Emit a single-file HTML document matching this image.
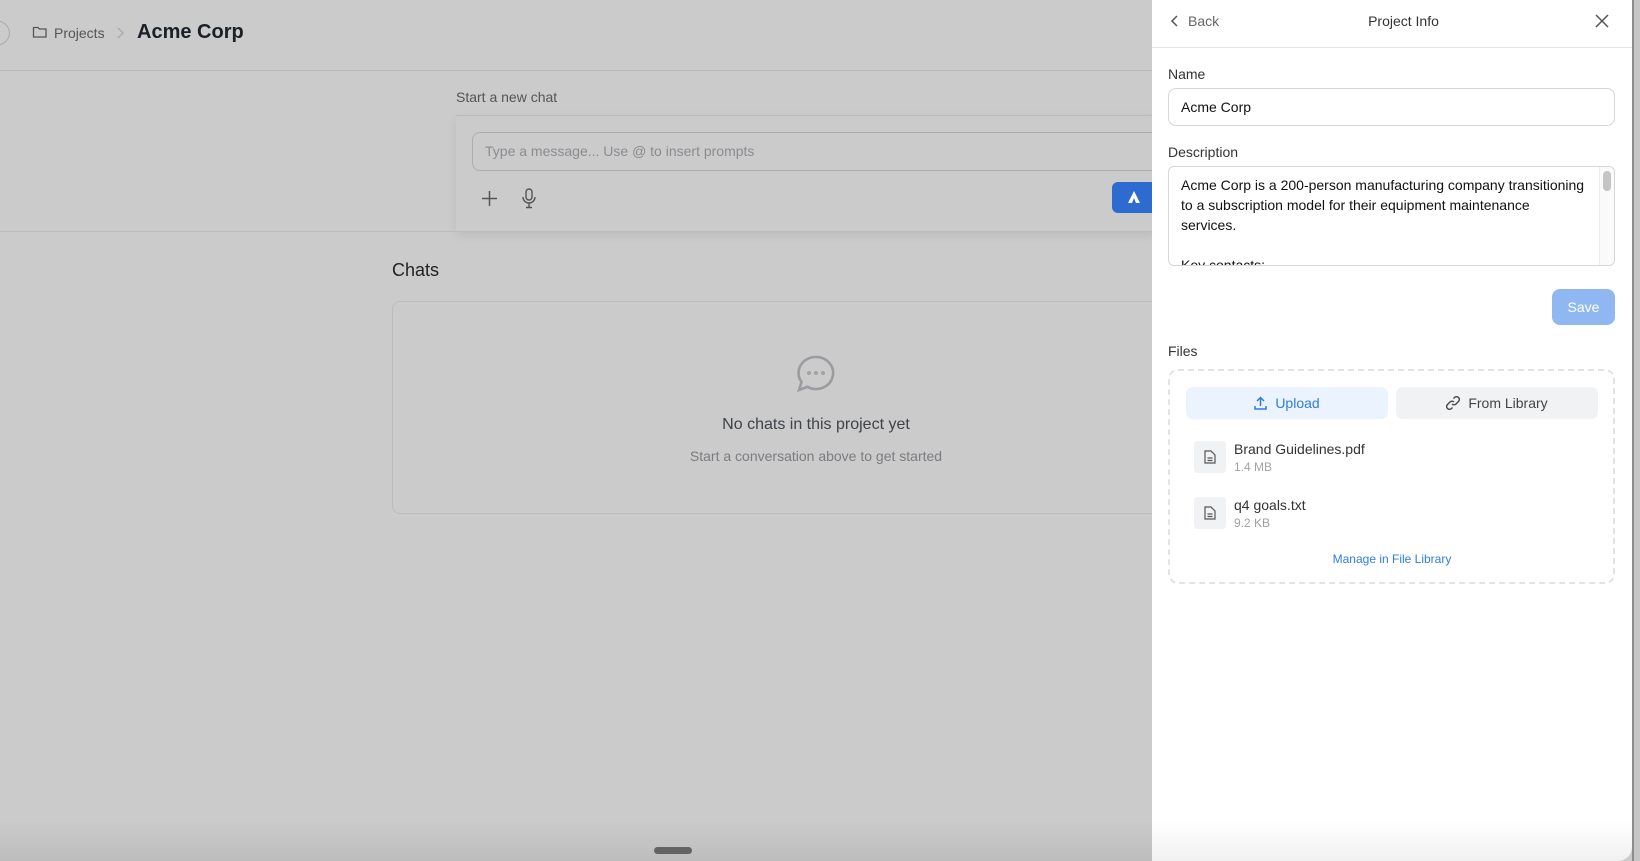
<!DOCTYPE html>
<html><head><meta charset="utf-8"><style>
*{box-sizing:border-box;margin:0;padding:0}
body{width:1640px;height:861px;overflow:hidden;background:#cbcbcb;font-family:"Liberation Sans",Arial,sans-serif;position:relative}
.a{position:absolute}
</style></head><body>
<div class="a" style="left:-20px;top:20px;width:30px;height:26px;border:1px solid #aaa;border-radius:50%"></div>
<svg class="a" style="left:32px;top:25px" width="16" height="14" viewBox="0 0 16 14" fill="none" stroke="#555" stroke-width="1.3"><path d="M1.5 2.5h4.5l1.5 1.5h6.5v8h-12.5z"/></svg>
<div class="a" style="left:54px;top:25px;font-size:14px;color:#555">Projects</div>
<svg class="a" style="left:116px;top:27px" width="8" height="12" viewBox="0 0 8 12" fill="none" stroke="#aaa" stroke-width="1.3"><path d="M2 1l5 5-5 5"/></svg>
<div class="a" style="left:137px;top:21px;font-size:20px;font-weight:bold;color:#1b1f27">Acme Corp</div>
<div class="a" style="left:0;top:70px;width:1152px;height:1px;background:#b9b9b9"></div>
<div class="a" style="left:456px;top:89px;font-size:14px;color:#555">Start a new chat</div>
<div class="a" style="left:456px;top:115px;width:700px;height:116px;border-top:1px solid #b9b9b9;box-shadow:0 4px 10px rgba(0,0,0,.08)"></div>
<div class="a" style="left:472px;top:132px;width:700px;height:39px;border:1px solid #aeaeae;border-radius:8px"></div>
<div class="a" style="left:485px;top:143px;font-size:14px;color:#8a8c90">Type a message... Use @ to insert prompts</div>
<svg class="a" style="left:481px;top:190px" width="17" height="17" viewBox="0 0 17 17" stroke="#555" stroke-width="1.5"><path d="M8.5 1v15M1 8.5h15"/></svg>
<svg class="a" style="left:521px;top:188px" width="16" height="21" viewBox="0 0 16 21" fill="none" stroke="#555" stroke-width="1.4"><rect x="5" y="1" width="6" height="11" rx="3"/><path d="M2 9a6 6 0 0012 0M8 15v4M5 19.5h6"/></svg>
<div class="a" style="left:1112px;top:182px;width:60px;height:31px;background:#2d6bd0;border-radius:6px"></div>
<svg class="a" style="left:1127px;top:190px" width="14" height="14" viewBox="0 0 14 14"><path d="M7 1l6 12H9L7 8 5 13H1z" fill="#fff"/></svg>
<div class="a" style="left:0;top:231px;width:1152px;height:1px;background:#bdbdbd"></div>
<div class="a" style="left:392px;top:260px;font-size:18px;color:#222">Chats</div>
<div class="a" style="left:392px;top:301px;width:800px;height:213px;border:1px solid #bcbcbc;border-radius:8px"></div>
<svg class="a" style="left:796px;top:355px" width="40" height="38" viewBox="0 0 40 38" fill="none" stroke="#9a9ca0" stroke-width="2.6"><path d="M20 2a17 16 0 11-8.5 29.8L3 35l2.5-8A17 16 0 0120 2z"/><circle cx="13" cy="18" r=".6" fill="#9a9ca0"/><circle cx="20" cy="18" r=".6" fill="#9a9ca0"/><circle cx="27" cy="18" r=".6" fill="#9a9ca0"/></svg>
<div class="a" style="left:616px;top:416px;width:400px;text-align:center;font-size:16px;color:#3f4248">No chats in this project yet</div>
<div class="a" style="left:616px;top:448px;width:400px;text-align:center;font-size:14px;color:#7a7c80">Start a conversation above to get started</div>
<div class="a" style="left:0;top:820px;width:1152px;height:41px;background:linear-gradient(#c9c9c900,#bdbdbd)"></div>
<div class="a" style="left:654px;top:847px;width:38px;height:7px;background:#636363;border-radius:4px"></div>
<div class="a" style="left:1632px;top:0;width:8px;height:861px;background:#c6c6c6;border-left:2px solid #8d8d8d"></div>
<div class="a" style="left:1152px;top:0;width:480px;height:861px;background:#fff;border-bottom-right-radius:14px;background-image:linear-gradient(#fff 820px,#f1f1f1)">
 <svg class="a" style="left:18px;top:14px" width="10" height="14" viewBox="0 0 10 14" fill="none" stroke="#555" stroke-width="1.5"><path d="M7 2L2 7l5 5"/></svg>
 <div class="a" style="left:36px;top:13px;font-size:14px;color:#666">Back</div>
 <div class="a" style="left:0;top:13px;width:503px;text-align:center;font-size:14px;color:#333">Project Info</div>
 <svg class="a" style="left:443px;top:14px" width="14" height="14" viewBox="0 0 14 14" stroke="#555" stroke-width="1.5"><path d="M1 1l12 12M13 1L1 13"/></svg>
 <div class="a" style="left:0;top:47px;width:480px;height:1px;background:#e6e6e6"></div>
 <div class="a" style="left:16px;top:66px;font-size:14px;color:#333">Name</div>
 <div class="a" style="left:16px;top:88px;width:447px;height:38px;border:1px solid #d6d6d6;border-radius:8px;padding:10px 12px;font-size:14px;color:#111">Acme Corp</div>
 <div class="a" style="left:16px;top:144px;font-size:14px;color:#333">Description</div>
 <div class="a" style="left:16px;top:166px;width:447px;height:100px;border:1px solid #d6d6d6;border-radius:6px;overflow:hidden;padding:8px 16px 0 12px;font-size:14px;line-height:20px;color:#111;white-space:nowrap">Acme Corp is a 200-person manufacturing company transitioning<br>to a subscription model for their equipment maintenance<br>services.<br><br>Key contacts:
  <div class="a" style="right:0;top:0;width:15px;height:100px;background:#fafafa;border-left:1px solid #eee"><div style="margin:4px 3px;width:8px;height:20px;background:#c4c4c4;border-radius:4px"></div></div>
 </div>
 <div class="a" style="left:400px;top:289px;width:63px;height:36px;background:#8fb8f2;border-radius:8px;color:#fff;font-size:14px;text-align:center;line-height:36px">Save</div>
 <div class="a" style="left:16px;top:343px;font-size:14px;color:#333">Files</div>
 <div class="a" style="left:16px;top:369px;width:447px;height:215px;border:2px dashed #e3e3e6;border-radius:10px"></div>
 <div class="a" style="left:34px;top:387px;width:202px;height:32px;background:#eaf3fe;border-radius:7px;color:#2f7de1;font-size:14px;line-height:32px;text-align:center"><svg width="13" height="14" viewBox="0 0 13 14" fill="none" stroke="#2f7de1" stroke-width="1.5" style="vertical-align:-2px;margin-right:8px"><path d="M6.5 10V2M3 5l3.5-3.5L10 5M1 10v3h11v-3"/></svg>Upload</div>
 <div class="a" style="left:244px;top:387px;width:202px;height:32px;background:#f1f2f4;border-radius:7px;color:#444;font-size:14px;line-height:32px;text-align:center"><svg width="14" height="14" viewBox="0 0 14 14" fill="none" stroke="#444" stroke-width="1.4" style="vertical-align:-2px;margin-right:8px"><path d="M6 8a3 3 0 004 0l2.5-2.5a2.8 2.8 0 00-4-4L7.5 2.5M8 6a3 3 0 00-4 0L1.5 8.5a2.8 2.8 0 004 4l1-1"/></svg>From Library</div>
 <div class="a" style="left:42px;top:441px;width:32px;height:32px;background:#f1f2f4;border-radius:4px"><svg style="margin:9px 10px" width="12" height="14" viewBox="0 0 12 14" fill="none" stroke="#555" stroke-width="1.2"><path d="M1 1h6l4 4v8H1z M3.5 8h5M3.5 10.5h5"/></svg></div>
 <div class="a" style="left:82px;top:441px;font-size:14px;color:#333">Brand Guidelines.pdf</div>
 <div class="a" style="left:82px;top:460px;font-size:12px;color:#a0a2a6">1.4 MB</div>
 <div class="a" style="left:42px;top:497px;width:32px;height:32px;background:#f1f2f4;border-radius:4px"><svg style="margin:9px 10px" width="12" height="14" viewBox="0 0 12 14" fill="none" stroke="#555" stroke-width="1.2"><path d="M1 1h6l4 4v8H1z M3.5 8h5M3.5 10.5h5"/></svg></div>
 <div class="a" style="left:82px;top:497px;font-size:14px;color:#333">q4 goals.txt</div>
 <div class="a" style="left:82px;top:516px;font-size:12px;color:#a0a2a6">9.2 KB</div>
 <div class="a" style="left:17px;top:552px;width:446px;text-align:center;font-size:12px;color:#2f7de1">Manage in File Library</div>
</div>
</body></html>
